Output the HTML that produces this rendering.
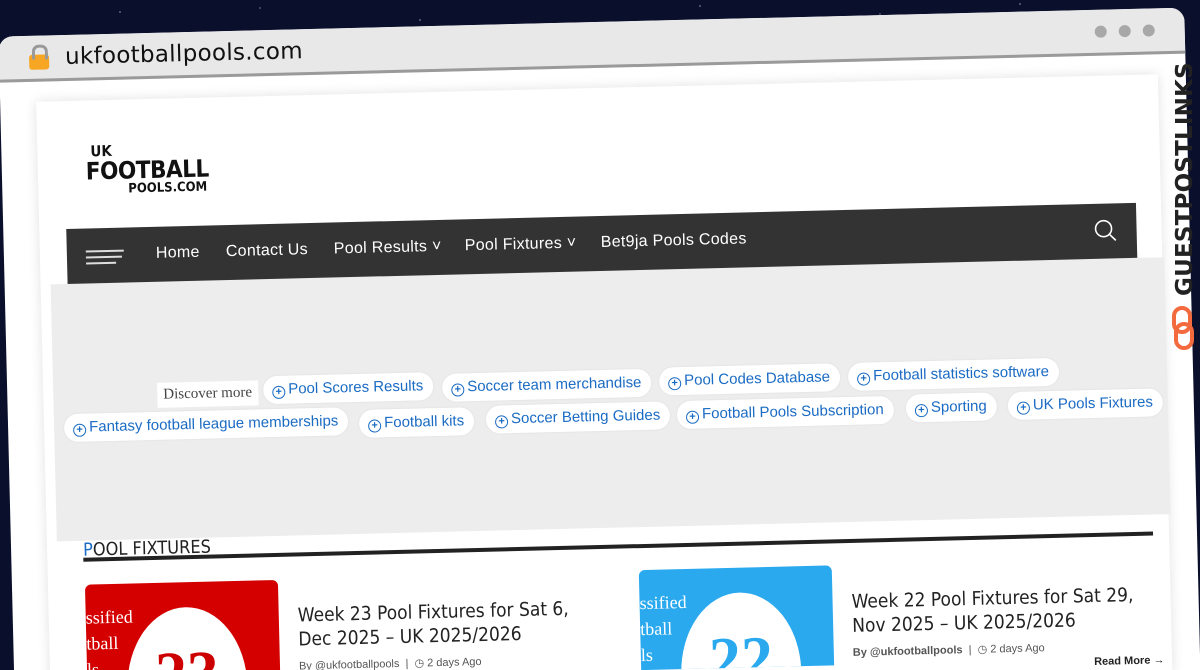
<!DOCTYPE html>
<html><head><meta charset="utf-8">
<style>
*{margin:0;padding:0;box-sizing:border-box}
html{width:1200px;height:670px;overflow:hidden}
body{width:1200px;height:670px;overflow:hidden;background:#0a0f2c;font-family:"Liberation Sans",sans-serif;position:relative}
.stars{position:absolute;inset:0;background-image:radial-gradient(1px 1px at 120px 12px,#fff,transparent),radial-gradient(1px 1px at 260px 8px,#ccd,transparent),radial-gradient(1px 1px at 420px 20px,#fff,transparent),radial-gradient(1px 1px at 700px 6px,#fff,transparent),radial-gradient(1px 1px at 880px 14px,#bbc,transparent),radial-gradient(1px 1px at 1020px 4px,#fff,transparent)}
#w{position:absolute;left:0;top:0;width:1200px;height:670px;overflow:visible;transform:rotate(-1.4deg);transform-origin:600px 335px}
.win{position:absolute;left:6px;top:22px;width:1186px;height:680px;background:#fff;border-radius:14px;overflow:hidden}
.bar{position:absolute;left:0;top:0;width:100%;height:46px;background:#e8e8e9;border-bottom:3px solid #9a9a9a}
.lock{position:absolute;left:30px;top:19px;width:20px;height:15px;background:#f6a623;border-radius:3px}
.lock:before{content:"";position:absolute;left:3px;top:-10px;width:10px;height:12px;border:3px solid #999;border-bottom:none;border-radius:7px 7px 0 0}
.url{position:absolute;left:66px;top:9px;font-size:23px;color:#111;font-family:"DejaVu Sans",sans-serif;letter-spacing:0.3px}
.dot{position:absolute;top:16px;width:12px;height:12px;border-radius:50%;background:#a8a8a8}
.card{position:absolute;left:42px;top:88px;width:1122px;height:600px;background:#fff;box-shadow:0 0 12px rgba(0,0,0,.12)}
.logo{position:absolute;left:90px;top:132px;font-family:"DejaVu Sans Condensed","DejaVu Sans",sans-serif;font-weight:bold;color:#111;line-height:1}
.nav{position:absolute;left:69px;top:216px;width:1070px;height:56px;background:#333}
.nav span{position:absolute;top:18px;color:#fff;font-size:16px;letter-spacing:.3px}
.ham{position:absolute;left:19px;top:22px;width:38px}
.ham i{display:block;height:2px;background:#ddd;margin-bottom:4px}
.ad{position:absolute;left:52px;top:271px;width:1114px;height:257px;background:#ededed}
.pill{position:absolute;height:28px;background:#fff;border-radius:14px;color:#1a6bc4;font-size:15px;line-height:28px;padding:0 10px 0 9px;white-space:nowrap;box-shadow:0 0 2px rgba(0,0,0,.08)}
.pill b{display:inline-block;width:13px;height:13px;border:1.6px solid #1a6bc4;border-radius:50%;font-size:11px;line-height:10px;text-align:center;font-weight:bold;margin-right:3px;vertical-align:-1px}
.disc{position:absolute;left:156px;top:372px;background:#fff;padding:4px 6px;font-family:"Liberation Serif",serif;font-size:15px;color:#444}
.sec{position:absolute;left:78px;top:527px;font-size:18px;color:#222;font-family:"DejaVu Sans Condensed",sans-serif}
.line{position:absolute;left:78px;top:545px;width:1070px;height:4px;background:#222}
.img{position:absolute;width:193px;height:100px;border-radius:6px 6px 0 0;overflow:hidden}
.img .c{position:absolute;left:40px;top:25px;width:120px;height:160px;border-radius:50%;background:#fff;font-family:"Liberation Serif",serif;font-weight:bold;font-size:64px;text-align:center;padding-top:30px}
.img .s{position:absolute;left:0;top:20px;color:#fff;font-family:"Liberation Serif",serif;font-size:18px;line-height:26px}
.t{position:absolute;font-size:19px;line-height:24px;color:#222;font-family:"DejaVu Sans Condensed",sans-serif}
.meta{position:absolute;font-size:11px;color:#555}
.gpl{position:absolute;left:1172px;top:296px;transform:rotate(-90deg);transform-origin:0 0;font-family:"DejaVu Sans",sans-serif;font-weight:bold;font-size:23px;color:#222;letter-spacing:0.2px;white-space:nowrap}
</style></head><body>
<div class="stars"></div>
<div id="w">
<div class="win">
 <div class="bar"><div class="lock"></div><div class="url">ukfootballpools.com</div>
 <div class="dot" style="left:1096px"></div><div class="dot" style="left:1120px"></div><div class="dot" style="left:1144px"></div></div>
</div>
<div class="card"></div>
<div class="logo"><div style="font-size:15px;margin-left:5px">UK</div><div style="font-size:24px;letter-spacing:-0.5px">FOOTBALL</div><div style="font-size:13px;margin-left:42px">POOLS.COM</div></div>
<div class="nav">
 <div class="ham"><i></i><i style="width:36px"></i><i style="width:30px"></i></div>
 <span style="left:89px">Home</span><span style="left:159px">Contact Us</span><span style="left:267px">Pool Results ˅</span><span style="left:398px">Pool Fixtures ˅</span><span style="left:534px">Bet9ja Pools Codes</span>
 <svg style="position:absolute;left:1026px;top:14px" width="26" height="26" viewBox="0 0 26 26"><circle cx="11" cy="11" r="8" fill="none" stroke="#fff" stroke-width="1.6"/><path d="M17 17l6 6" stroke="#fff" stroke-width="1.6"/></svg>
</div>
<div class="ad"></div>
<div class="disc">Discover more</div>
<div class="pill" style="left:262px;top:368px"><b>+</b>Pool Scores Results</div>
<div class="pill" style="left:441px;top:370px"><b>+</b>Soccer team merchandise</div>
<div class="pill" style="left:658px;top:369px"><b>+</b>Pool Codes Database</div>
<div class="pill" style="left:847px;top:369px"><b>+</b>Football statistics software</div>
<div class="pill" style="left:62px;top:401px"><b>+</b>Fantasy football league memberships</div>
<div class="pill" style="left:357px;top:404px"><b>+</b>Football kits</div>
<div class="pill" style="left:484px;top:403px"><b>+</b>Soccer Betting Guides</div>
<div class="pill" style="left:675px;top:403px"><b>+</b>Football Pools Subscription</div>
<div class="pill" style="left:904px;top:402px"><b>+</b>Sporting</div>
<div class="pill" style="left:1006px;top:402px"><b>+</b>UK Pools Fixtures</div>
<div class="sec"><span style="color:#1a6bc4">P</span>OOL FIXTURES</div>
<div class="line"></div>
<div class="img" style="left:79px;top:572px;background:#d40000"><div class="s">ssified<br>tball<br>ls</div><div class="c" style="color:#c00">23</div></div>
<div class="t" style="left:291px;top:596px">Week 23 Pool Fixtures for Sat 6,<br>Dec 2025 – UK 2025/2026</div>
<div class="meta" style="left:291px;top:652px">By @ukfootballpools &nbsp;|&nbsp; ◷ 2 days Ago</div>
<div class="img" style="left:633px;top:571px;background:#2aa9ef"><div class="s">ssified<br>tball<br>ls</div><div class="c" style="color:#2aa9ef">22</div></div>
<div class="t" style="left:845px;top:596px">Week 22 Pool Fixtures for Sat 29,<br>Nov 2025 – UK 2025/2026</div>
<div class="meta" style="left:845px;top:652px"><b>By @ukfootballpools</b> &nbsp;|&nbsp; ◷ 2 days Ago</div>
<div class="meta" style="left:1086px;top:668px;font-weight:bold;color:#222">Read More →</div>
</div>
<div class="gpl">GUESTPOSTLINKS</div>
<svg style="position:absolute;left:1171px;top:306px" width="24" height="44" viewBox="0 0 24 44"><rect x="3" y="2" width="16" height="24" rx="8" fill="none" stroke="#f26a3d" stroke-width="4"/><rect x="5" y="18" width="16" height="24" rx="8" fill="none" stroke="#f26a3d" stroke-width="4"/></svg>
</body></html>
